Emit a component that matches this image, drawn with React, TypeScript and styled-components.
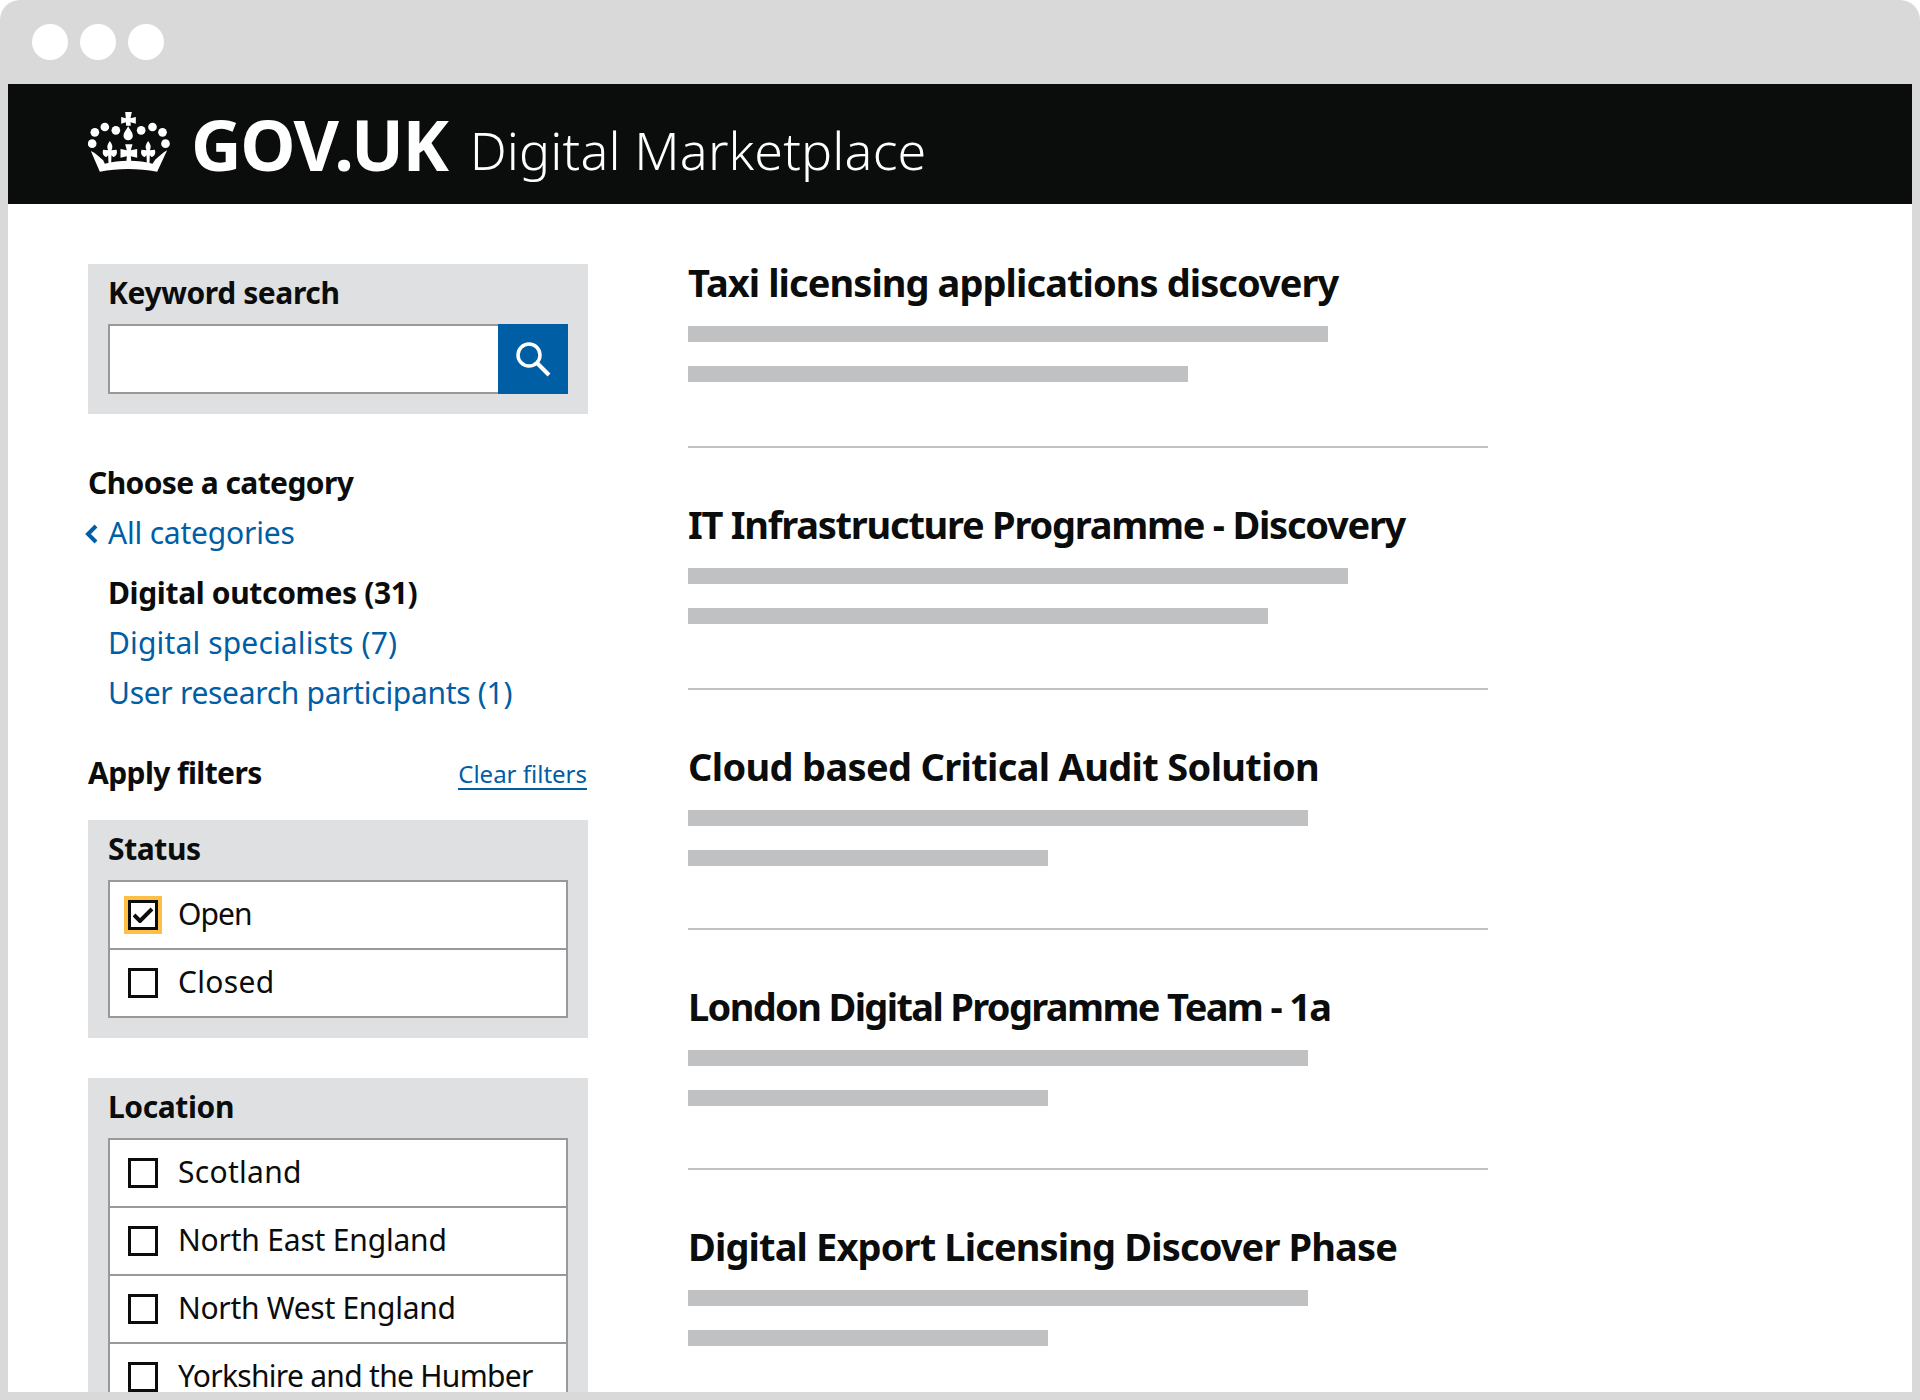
import React from "react";
import styled, { createGlobalStyle } from "styled-components";

const GlobalStyle = createGlobalStyle`
  html, body {
    margin: 0;
    padding: 0;
    background: #fff;
  }
  body {
    font-family: "Noto Sans", "Open Sans", sans-serif;
    color: #0b0c0c;
  }
`;

const BrowserFrame = styled.div`
  width: 1920px;
  height: 1400px;
  box-sizing: border-box;
  padding: 0 8px 8px;
  background: #d9d9d9;
  border-radius: 20px 20px 0 0;
  display: flex;
  flex-direction: column;
  overflow: hidden;
`;

const TitleBar = styled.div`
  height: 84px;
  flex: none;
  display: flex;
  align-items: center;
  gap: 12px;
  padding-left: 24px;
`;

const Dot = styled.span`
  width: 36px;
  height: 36px;
  border-radius: 50%;
  background: #fff;
`;

const Header = styled.header`
  height: 120px;
  flex: none;
  background: #0b0c0c;
  display: flex;
  align-items: center;
  padding-left: 80px;
`;

const Crown = styled.svg`
  width: 82px;
  height: 60px;
  margin-right: 21px;
  margin-bottom: 4px;
  flex: none;
`;

const Wordmark = styled.span`
  font-size: 70px;
  font-weight: 700;
  color: #fff;
  letter-spacing: -1.4px;
  margin-right: 22px;
`;

const ServiceName = styled.span`
  font-size: 52px;
  font-weight: 300;
  color: #fff;
  letter-spacing: 0.15px;
  margin-top: 10px;
`;

const Content = styled.main`
  flex: 1;
  min-height: 0;
  background: #fff;
  overflow: hidden;
  display: flex;
  gap: 100px;
  padding: 60px 0 0 80px;
`;

const Sidebar = styled.aside`
  width: 500px;
  flex: none;
`;

const Panel = styled.section`
  background: #dee0e2;
  padding: 10px 20px 20px;
  margin-bottom: 40px;
`;

const PanelTitle = styled.h3`
  margin: 0 0 12px;
  font-size: 30px;
  line-height: 38px;
  font-weight: 700;
  letter-spacing: -0.4px;
`;

const SearchRow = styled.div`
  display: flex;
  height: 70px;
`;

const SearchInput = styled.div`
  flex: 1;
  background: #fff;
  border: 2px solid #999;
  border-right: 0;
`;

const SearchButton = styled.div`
  width: 70px;
  background: #005ea5;
  display: flex;
  align-items: center;
  justify-content: center;
`;

const CategorySection = styled.nav`
  padding-top: 4px;
`;

const SectionHeading = styled.h2`
  margin: 0;
  font-size: 30px;
  line-height: 50px;
  font-weight: 700;
  letter-spacing: -0.6px;
`;

const CategoryLink = styled.a<{ $current?: boolean; $tracking?: number }>`
  display: block;
  position: relative;
  padding-left: 20px;
  font-size: 30px;
  line-height: 50px;
  font-weight: ${(p) => (p.$current ? 700 : 400)};
  letter-spacing: ${(p) => p.$tracking ?? -0.2}px;
  color: ${(p) => (p.$current ? "#0b0c0c" : "#005ea5")};
`;

const BackChevron = styled.svg`
  position: absolute;
  left: -3px;
  top: 16px;
  width: 14px;
  height: 20px;
`;

const CategoryList = styled.div`
  margin: 10px 0 30px;
`;

const FilterHeader = styled.div`
  display: flex;
  justify-content: space-between;
  align-items: center;
  margin-bottom: 22px;
`;

const ClearLink = styled.a`
  font-size: 24px;
  line-height: 28px;
  padding-top: 4px;
  margin-right: 1px;
  color: #005ea5;
  border-bottom: 2px solid #005ea5;
`;

const OptionList = styled.div`
  background: #fff;
  border: 2px solid #999;
`;

const OptionRow = styled.div`
  height: 66px;
  display: flex;
  align-items: center;
  padding-left: 18px;
  gap: 20px;
  & + & {
    border-top: 2px solid #999;
  }
`;

const OptionLabel = styled.span<{ $tracking: number }>`
  font-size: 30px;
  letter-spacing: ${(p) => p.$tracking}px;
  margin-bottom: 3px;
`;

const CheckBox = styled.span<{ $focused?: boolean }>`
  width: 30px;
  height: 30px;
  box-sizing: border-box;
  flex: none;
  border: 3px solid #0b0c0c;
  display: flex;
  align-items: center;
  justify-content: center;
  background: #fff;
  outline: ${(p) => (p.$focused ? "4px solid #ffbf47" : "none")};
`;

const Results = styled.div`
  width: 800px;
  flex: none;
  margin-top: -5px;
`;

const Result = styled.article<{ $tail: number }>`
  padding-bottom: ${(p) => p.$tail}px;
  & + & {
    border-top: 2px solid #bfc1c3;
    padding-top: 53px;
  }
`;

const ResultTitle = styled.h2<{ $tracking: number }>`
  margin: 0 0 21px;
  font-size: 38px;
  line-height: 46px;
  font-weight: 700;
  letter-spacing: ${(p) => p.$tracking}px;
`;

const SkeletonLines = styled.div`
  display: flex;
  flex-direction: column;
  gap: 24px;
`;

const SkeletonLine = styled.div`
  height: 16px;
  background: #bfc1c3;
`;

const results = [
  { title: "Taxi licensing applications discovery", bars: [640, 500], tracking: -0.93, tail: 64 },
  { title: "IT Infrastructure Programme - Discovery", bars: [660, 580], tracking: -1.25, tail: 64 },
  { title: "Cloud based Critical Audit Solution", bars: [620, 360], tracking: -0.67, tail: 62 },
  { title: "London Digital Programme Team - 1a", bars: [620, 360], tracking: -1.65, tail: 62 },
  { title: "Digital Export Licensing Discover Phase", bars: [620, 360], tracking: -0.87, tail: 0 },
];

const locations = [
  { label: "Scotland", tracking: 0.3 },
  { label: "North East England", tracking: -0.2 },
  { label: "North West England", tracking: -0.3 },
  { label: "Yorkshire and the Humber", tracking: -0.7 },
];

// x positions of the two fleurs on the crown, either side of the middle cross
const fleurs = [90, 205];

function fleurPath(x: number) {
  return `M${x} 122C${x + 8} 132 ${x + 10} 140 ${x + 5} 150L${x + 20} 148C${x + 24} 160 ${x + 18} 168 ${x + 10} 170L${x + 5} 165L${x + 4} 192L${x - 4} 192L${x - 5} 165L${x - 10} 170C${x - 18} 168 ${x - 24} 160 ${x - 20} 148L${x - 5} 150C${x - 10} 140 ${x - 8} 132 ${x} 122Z`;
}

function Option({ label, checked, tracking = -0.3 }: { label: string; checked?: boolean; tracking?: number }) {
  return (
    <OptionRow>
      <CheckBox $focused={checked}>
        {checked && (
          <svg width="20" height="16" viewBox="0 0 20 16">
            <path d="M1 8l6 6 12-12" fill="none" stroke="#0b0c0c" strokeWidth="4" />
          </svg>
        )}
      </CheckBox>
      <OptionLabel $tracking={tracking}>{label}</OptionLabel>
    </OptionRow>
  );
}

export default function App() {
  return (
    <>
      <GlobalStyle />
      <BrowserFrame>
        <TitleBar>
          <Dot />
          <Dot />
          <Dot />
        </TitleBar>
        <Header>
          <Crown viewBox="25 35 245 180">
            <g fill="#fff">
              <path d="M124 50L138 54L136 35H156L152 54L168 50V70L152 66L153 76H139L138 66L124 70Z" />
              <path d="M145 78C150 88 159 96 159 106A14 14 0 0 1 131 106C131 96 140 88 145 78Z" />
              <circle cx="108" cy="90" r="13" />
              <circle cx="75" cy="80" r="13" />
              <circle cx="45" cy="96" r="13" />
              <circle cx="37" cy="130" r="13" />
              <circle cx="184" cy="90" r="13" />
              <circle cx="218" cy="80" r="13" />
              <circle cx="248" cy="96" r="13" />
              <circle cx="257" cy="130" r="13" />
              <path d="M33 152C48 158 58 170 70 180L75 190C115 178 180 178 218 190L226 178C238 168 250 156 262 150L232 214C175 203 115 203 60 214Z" />
              <path d="M136 132L158 132L153 150L172 146L172 172L153 168L155 192L139 192L141 168L122 172L122 146L141 150Z" />
              {fleurs.map((x) => (
                <path key={x} d={fleurPath(x)} />
              ))}
            </g>
          </Crown>
          <Wordmark>GOV.UK</Wordmark>
          <ServiceName>Digital Marketplace</ServiceName>
        </Header>
        <Content>
          <Sidebar>
            <Panel>
              <PanelTitle>Keyword search</PanelTitle>
              <SearchRow>
                <SearchInput />
                <SearchButton>
                  <svg width="38" height="38" viewBox="0 0 38 38">
                    <circle cx="15" cy="15" r="11" fill="none" stroke="#fff" strokeWidth="3.5" />
                    <path d="M23 23l12 12" stroke="#fff" strokeWidth="4" />
                  </svg>
                </SearchButton>
              </SearchRow>
            </Panel>
            <CategorySection>
              <SectionHeading>Choose a category</SectionHeading>
              <CategoryLink>
                <BackChevron viewBox="0 0 14 20">
                  <path d="M11 2l-8 8 8 8" fill="none" stroke="#005ea5" strokeWidth="4" />
                </BackChevron>
                All categories
              </CategoryLink>
              <CategoryList>
                <CategoryLink $current $tracking={-0.35}>Digital outcomes (31)</CategoryLink>
                <CategoryLink $tracking={0.15}>Digital specialists (7)</CategoryLink>
                <CategoryLink $tracking={-0.3}>User research participants (1)</CategoryLink>
              </CategoryList>
            </CategorySection>
            <FilterHeader>
              <SectionHeading>Apply filters</SectionHeading>
              <ClearLink>Clear filters</ClearLink>
            </FilterHeader>
            <Panel>
              <PanelTitle>Status</PanelTitle>
              <OptionList>
                <Option label="Open" checked tracking={-0.9} />
                <Option label="Closed" tracking={0.3} />
              </OptionList>
            </Panel>
            <Panel>
              <PanelTitle>Location</PanelTitle>
              <OptionList>
                {locations.map((item) => (
                  <Option key={item.label} label={item.label} tracking={item.tracking} />
                ))}
              </OptionList>
            </Panel>
          </Sidebar>
          <Results>
            {results.map((item) => (
              <Result key={item.title} $tail={item.tail}>
                <ResultTitle $tracking={item.tracking}>{item.title}</ResultTitle>
                <SkeletonLines>
                  {item.bars.map((width) => (
                    <SkeletonLine key={width} style={{ width }} />
                  ))}
                </SkeletonLines>
              </Result>
            ))}
          </Results>
        </Content>
      </BrowserFrame>
    </>
  );
}
